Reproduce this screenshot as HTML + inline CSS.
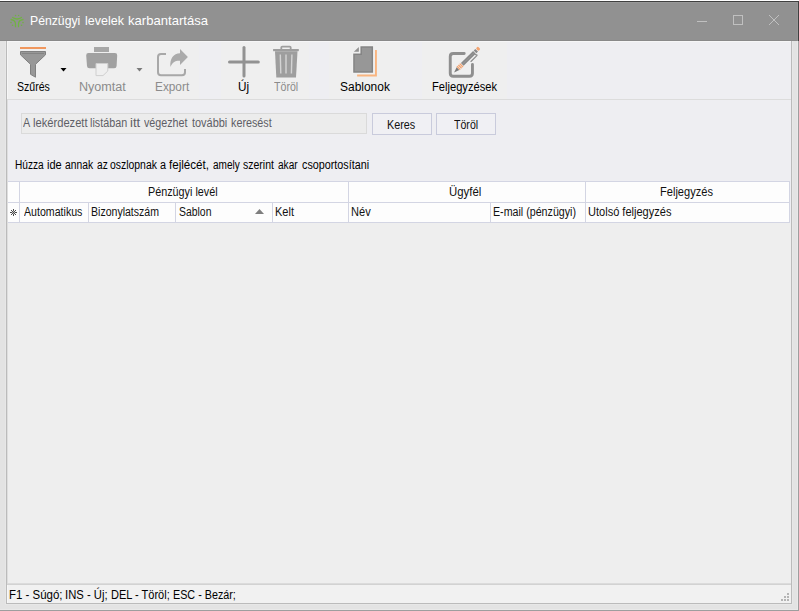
<!DOCTYPE html>
<html lang="hu">
<head>
<meta charset="utf-8">
<title>Pénzügyi levelek karbantartása</title>
<style>
html,body{margin:0;padding:0;}
body{width:799px;height:611px;overflow:hidden;background:#e5e5e5;font-family:"Liberation Sans",sans-serif;font-size:12px;color:#000;position:relative;}
.r{position:absolute;}
.tx{position:absolute;white-space:nowrap;line-height:1;transform-origin:0 0;}
svg{position:absolute;left:0;top:0;}
</style>
</head>
<body>
<!-- window frame -->
<div class="r" style="left:0;top:0;width:799px;height:611px;background:#e3e3e3"></div>
<div class="r" style="left:797px;top:41px;width:1px;height:569px;background:#e9e9e9"></div>
<div class="r" style="left:0;top:609px;width:798px;height:1px;background:#e9e9e9"></div>
<div class="r" style="left:5px;top:41px;width:788px;height:564px;background:#e7e7e7"></div>
<div class="r" style="left:6px;top:41px;width:786px;height:563px;background:#bbbbbb"></div>
<div class="r" style="left:7px;top:41px;width:784px;height:562px;background:#eeeef2"></div>
<div class="r" style="left:798px;top:0;width:1px;height:611px;background:#9e9e9e"></div>
<div class="r" style="left:0;top:610px;width:799px;height:1px;background:#9e9e9e"></div>
<!-- title bar -->
<div class="r" style="left:0;top:0;width:799px;height:41px;background:#919191"></div>
<div class="r" style="left:0;top:40px;width:798px;height:1px;background:#898989"></div>
<div class="r" style="left:0;top:2px;width:798px;height:1px;background:#999999"></div>
<div class="r" style="left:797px;top:2px;width:1px;height:39px;background:#979797"></div>
<div class="r" style="left:0;top:1px;width:799px;height:1px;background:#404040"></div>
<div class="r" style="left:798px;top:1px;width:1px;height:40px;background:#404040"></div>
<div class="r" style="left:0;top:0;width:799px;height:1px;background:#ffffff"></div>
<!-- toolbar -->
<div class="r" style="left:7px;top:41px;width:784px;height:58px;background:#eeeef2"></div>
<div class="r" style="left:7px;top:41px;width:192px;height:58px;background:#efefef"></div>
<div class="r" style="left:221px;top:41px;width:88px;height:58px;background:#efefef"></div>
<div class="r" style="left:329px;top:41px;width:71px;height:58px;background:#efefef"></div>
<div class="r" style="left:422px;top:41px;width:85px;height:58px;background:#efefef"></div>
<div class="r" style="left:7px;top:99px;width:784px;height:1px;background:#dcdcdc"></div>
<div class="r" style="left:7px;top:41px;width:784px;height:1px;background:#f6f6f7"></div>
<div class="r" style="left:7px;top:41px;width:1px;height:58px;background:#f6f6f6"></div>
<!-- search row -->
<div class="r" style="left:21px;top:113px;width:346px;height:21px;background:#dadada"></div>
<div class="r" style="left:22px;top:114px;width:344px;height:19px;background:#ececec"></div>
<div class="r" style="left:372px;top:113px;width:60px;height:22px;background:#c9cbdc"></div>
<div class="r" style="left:373px;top:114px;width:58px;height:20px;background:#f0f0f4"></div>
<div class="r" style="left:436px;top:113px;width:60px;height:22px;background:#c9cbdc"></div>
<div class="r" style="left:437px;top:114px;width:58px;height:20px;background:#f0f0f4"></div>
<!-- grid -->
<div class="r" style="left:8px;top:181px;width:782px;height:42px;background:#d3d5e3"></div>
<div class="r" style="left:8px;top:182px;width:11px;height:20px;background:#fdfdfd"></div>
<div class="r" style="left:8px;top:203px;width:11px;height:19px;background:#fdfdfd"></div>
<div class="r" style="left:20px;top:182px;width:328px;height:20px;background:#fdfdfd"></div>
<div class="r" style="left:349px;top:182px;width:236px;height:20px;background:#fdfdfd"></div>
<div class="r" style="left:586px;top:182px;width:203px;height:20px;background:#fdfdfd"></div>
<div class="r" style="left:20px;top:203px;width:68px;height:19px;background:#fdfdfd"></div>
<div class="r" style="left:89px;top:203px;width:86px;height:19px;background:#fdfdfd"></div>
<div class="r" style="left:176px;top:203px;width:96px;height:19px;background:#fdfdfd"></div>
<div class="r" style="left:273px;top:203px;width:75px;height:19px;background:#fdfdfd"></div>
<div class="r" style="left:349px;top:203px;width:141px;height:19px;background:#fdfdfd"></div>
<div class="r" style="left:491px;top:203px;width:94px;height:19px;background:#fdfdfd"></div>
<div class="r" style="left:586px;top:203px;width:203px;height:19px;background:#fdfdfd"></div>
<div class="r" style="left:8px;top:223px;width:783px;height:360px;background:#eeeeee"></div>
<div class="r" style="left:7px;top:100px;width:1px;height:483px;background:#dedede"></div>
<!-- status bar -->
<div class="r" style="left:7px;top:583px;width:784px;height:1px;background:#dbdbdb"></div>
<div class="r" style="left:7px;top:584px;width:784px;height:1px;background:#d2d2d2"></div>
<div class="r" style="left:7px;top:585px;width:784px;height:18px;background:#f1f1f1"></div>
<div class="r" style="left:7px;top:585px;width:1px;height:18px;background:#f7f7f7"></div>

<svg width="799" height="611" viewBox="0 0 799 611">
<!-- app icon -->
<g fill="none" stroke="#71b244" stroke-width="1.300" stroke-linecap="round">
<path d="M12.700 17.400Q17.050 20.600 21.400 17.400"/>
<path d="M11.100 19.500Q15.500 20.200 15.500 24.200V26.700"/>
<path d="M23 19.500Q18.500 20.200 18.500 24.200V26.700"/>
</g>
<g fill="#71b244">
<circle cx="15.550" cy="15.500" r=".8"/><circle cx="18.600" cy="15.500" r=".8"/>
<circle cx="11" cy="22.600" r=".8"/><circle cx="12.550" cy="25.300" r=".8"/>
<circle cx="23" cy="22.600" r=".8"/><circle cx="21.500" cy="25.300" r=".8"/>
</g>
<!-- window controls -->
<g stroke="#c0c0c0" stroke-width="1" fill="none">
<path d="M697 21.5H707"/>
<rect x="733.5" y="15.500" width="9" height="9"/>
<path d="M769 15L779 25M779 15L769 25"/>
</g>
<!-- funnel -->
<rect x="20" y="47" width="26" height="2" fill="#f0975e"/>
<path d="M20.5 51.500H45.500V54.800L35.500 64.300V77.200L30.500 74.300V64.300L20.500 54.800Z" fill="#989898" stroke="#808080" stroke-width="1" stroke-linejoin="round"/>
<path d="M22 53.500H44" stroke="#848484" stroke-width="1" fill="none"/>
<path d="M60.500 68H66.500L63.500 71.500Z" fill="#000"/>
<!-- printer -->
<rect x="94" y="47" width="15" height="5" fill="#a7a7a7"/>
<path d="M88.500 53H114.900Q117.300 53 117.200 55.400L116.600 65.900Q116.500 68.300 114.100 68.300H89.500Q87.100 68.300 87 65.900L86.200 55.400Q86.100 53 88.500 53Z" fill="#a1a1a1"/>
<path d="M96 63.500H107.800V71L103 75.600H96Z" fill="#efefef" stroke="#cfcfcf" stroke-width="1"/>
<path d="M136.500 68H142.500L139.500 71.500Z" fill="#7a7a7a"/>
<!-- export -->
<path d="M166 54.100H161Q158 54.100 158 57.100V72.200Q158 75.200 161 75.200H182Q185 75.200 185 72.200V69" fill="none" stroke="#a8a8a8" stroke-width="2"/>
<path d="M180 49.100L187.900 57L180 64.900V60.800C175 60.600 172.500 62.500 170.400 66.900C169.600 58.500 173.500 53.500 180 53.300Z" fill="#ababab"/>
<!-- plus -->
<rect x="242.500" y="46" width="3" height="31.600" rx="1.500" fill="#929292"/>
<rect x="228" y="60.500" width="31.800" height="3" rx="1.500" fill="#929292"/>
<!-- trash -->
<path d="M281.300 49.500V47.600Q281.300 46.700 282.300 46.700H289.700Q290.700 46.700 290.700 47.600V49.500" fill="none" stroke="#9e9e9e" stroke-width="1.800"/>
<rect x="273.100" y="49" width="25.700" height="2.200" fill="#9e9e9e"/>
<path d="M275 51.200H297.500L296 77.600H276.300Z" fill="#9e9e9e"/>
<g stroke="#d4d4d4" stroke-width="1.400"><path d="M280.300 54.500L280.800 73.500"/><path d="M286 54.500V73.500"/><path d="M291.900 54.500L291.400 73.500"/></g>
<!-- sablonok -->
<path d="M375 49.900H376.900V76.400H357.100V74.400H375Z" fill="#f9b580"/>
<path d="M352.700 53H359.900V45.800H373.700V73.300H352.700Z" fill="#f7f7f7"/>
<path d="M360.400 46.300H373.100V72.800H353.200V53.500H360.400Z" fill="#848484"/>
<path d="M361.900 47.800H371.600V71.300H354.700V55H361.900Z" fill="#979797"/>
<path d="M353.800 51.700H358.900V46.900Z" fill="#929292"/>
<!-- feljegyzesek -->
<path d="M464.200 53.550H453.250Q450.250 53.550 450.250 56.550V73.250Q450.250 76.250 453.250 76.250H469.450Q472.450 76.250 472.450 73.250V64.400" fill="none" stroke="#8f8f8f" stroke-width="2.900" stroke-linecap="round"/>
<g transform="translate(454.100 72.400) rotate(-44.500) scale(.97 1)">
<path d="M0 0L5.600 -1.900V1.900Z" fill="#7a7a7a"/>
<rect x="5.800" y="-2.300" width="1.400" height="4.600" fill="#f3a370"/>
<rect x="7.800" y="-2.300" width="1.400" height="4.600" fill="#f3a370"/>
<rect x="9.800" y="-2.300" width="1.400" height="4.600" fill="#f3a370"/>
<rect x="11.800" y="-1.900" width="17.600" height="3.800" fill="#898989"/>
<path d="M12 0H29.200" stroke="#9c9c9c" stroke-width=".7" fill="none"/>
<rect x="30.300" y="-1.900" width="2.300" height="3.800" fill="#898989"/>
<rect x="33.200" y="-1.900" width="3" height="3.800" rx="1.200" fill="#f3a370"/>
<path d="M28.500 2.200Q30.600 4 28.500 4H20.300" stroke="#8c8c8c" stroke-width="1.200" fill="none" stroke-linecap="round"/>
</g>
<!-- sort arrow -->
<path d="M255 214H264L259.500 209Z" fill="#7e7e7e"/>
<!-- row indicator -->
<g fill="#4c4c4c"><rect x="13" y="209" width="1" height="7"/><rect x="10" y="212" width="7" height="1"/><rect x="11" y="210" width="1" height="1"/><rect x="12" y="211" width="1" height="1"/><rect x="14" y="213" width="1" height="1"/><rect x="15" y="214" width="1" height="1"/><rect x="15" y="210" width="1" height="1"/><rect x="14" y="211" width="1" height="1"/><rect x="12" y="213" width="1" height="1"/><rect x="11" y="214" width="1" height="1"/></g>
<g fill="#bdbdbd"><rect x="13" y="211" width="1" height="1"/><rect x="13" y="213" width="1" height="1"/><rect x="12" y="212" width="1" height="1"/><rect x="14" y="212" width="1" height="1"/></g>
<!-- size grip -->
<g fill="#b4b4b4"><rect x="787" y="593" width="2" height="2"/><rect x="784" y="596" width="2" height="2"/><rect x="787" y="596" width="2" height="2"/><rect x="781" y="599" width="2" height="2"/><rect x="784" y="599" width="2" height="2"/><rect x="787" y="599" width="2" height="2"/></g>

</svg>

<div class="tx" id="t_title1" style="left:30.00px;top:14.00px;font-size:13px;color:#ffffff;transform:scaleX(0.9397)">Pénzügyi</div>
<div class="tx" id="t_title2" style="left:85.00px;top:14.00px;font-size:13px;color:#ffffff;transform:scaleX(0.9613)">levelek</div>
<div class="tx" id="t_title3" style="left:128.00px;top:14.00px;font-size:13px;color:#ffffff;transform:scaleX(1.0063)">karbantartása</div>
<div class="tx" id="t_szures" style="left:17.00px;top:81.00px;font-size:12px;color:#000;transform:scaleX(0.8803)">Szűrés</div>
<div class="tx" id="t_nyomtat" style="left:79.00px;top:81.00px;font-size:12px;color:#8b8b8b;transform:scaleX(1.0478)">Nyomtat</div>
<div class="tx" id="t_export" style="left:155.00px;top:81.00px;font-size:12px;color:#8b8b8b;transform:scaleX(0.9851)">Export</div>
<div class="tx" id="t_uj" style="left:238.00px;top:81.00px;font-size:12px;color:#000;transform:scaleX(0.9800)">Új</div>
<div class="tx" id="t_torol" style="left:274.00px;top:81.00px;font-size:12px;color:#8b8b8b;transform:scaleX(0.8843)">Töröl</div>
<div class="tx" id="t_sablonok" style="left:340.00px;top:81.00px;font-size:12px;color:#000;transform:scaleX(0.9969)">Sablonok</div>
<div class="tx" id="t_felj" style="left:432.00px;top:81.00px;font-size:12px;color:#000;transform:scaleX(0.9290)">Feljegyzések</div>
<div class="tx" id="t_s1" style="left:23.00px;top:117.00px;font-size:12px;color:#5e5e66;transform:scaleX(0.9000)">A</div>
<div class="tx" id="t_s2" style="left:33.00px;top:117.00px;font-size:12px;color:#5e5e66;transform:scaleX(0.9297)">lekérdezett</div>
<div class="tx" id="t_s3" style="left:90.00px;top:117.00px;font-size:12px;color:#5e5e66;transform:scaleX(0.8975)">listában</div>
<div class="tx" id="t_s4" style="left:130.00px;top:117.00px;font-size:12px;color:#5e5e66;transform:scaleX(1.0900)">itt</div>
<div class="tx" id="t_s5" style="left:144.00px;top:117.00px;font-size:12px;color:#5e5e66;transform:scaleX(0.8932)">végezhet</div>
<div class="tx" id="t_s6" style="left:192.00px;top:117.00px;font-size:12px;color:#5e5e66;transform:scaleX(0.9107)">további</div>
<div class="tx" id="t_s7" style="left:231.00px;top:117.00px;font-size:12px;color:#5e5e66;transform:scaleX(0.8986)">keresést</div>
<div class="tx" id="t_keres" style="left:387.00px;top:119.00px;font-size:12px;color:#111;transform:scaleX(0.9017)">Keres</div>
<div class="tx" id="t_torol2" style="left:454.00px;top:119.00px;font-size:12px;color:#111;transform:scaleX(0.8820)">Töröl</div>
<div class="tx" id="t_g1" style="left:15.00px;top:159.00px;font-size:12px;color:#000;transform:scaleX(0.8441)">Húzza</div>
<div class="tx" id="t_g2" style="left:47.00px;top:159.00px;font-size:12px;color:#000;transform:scaleX(0.9172)">ide</div>
<div class="tx" id="t_g3" style="left:65.00px;top:159.00px;font-size:12px;color:#000;transform:scaleX(0.8580)">annak</div>
<div class="tx" id="t_g4" style="left:97.00px;top:159.00px;font-size:12px;color:#000;transform:scaleX(0.8438)">az</div>
<div class="tx" id="t_g5" style="left:110.00px;top:159.00px;font-size:12px;color:#000;transform:scaleX(0.8683)">oszlopnak</div>
<div class="tx" id="t_g6" style="left:160.00px;top:159.00px;font-size:12px;color:#000;transform:scaleX(0.9000)">a</div>
<div class="tx" id="t_g7" style="left:169.00px;top:159.00px;font-size:12px;color:#000;transform:scaleX(0.9679)">fejlécét,</div>
<div class="tx" id="t_g8" style="left:213.00px;top:159.00px;font-size:12px;color:#000;transform:scaleX(0.8367)">amely</div>
<div class="tx" id="t_g9" style="left:243.00px;top:159.00px;font-size:12px;color:#000;transform:scaleX(0.8753)">szerint</div>
<div class="tx" id="t_g10" style="left:278.00px;top:159.00px;font-size:12px;color:#000;transform:scaleX(0.8400)">akar</div>
<div class="tx" id="t_g11" style="left:302.00px;top:159.00px;font-size:12px;color:#000;transform:scaleX(0.8977)">csoportosítani</div>
<div class="tx" id="t_b1" style="left:148.00px;top:186.00px;font-size:12px;color:#111;transform:scaleX(0.8990)">Pénzügyi levél</div>
<div class="tx" id="t_b2" style="left:449.00px;top:186.00px;font-size:12px;color:#111;transform:scaleX(0.9484)">Ügyfél</div>
<div class="tx" id="t_b3" style="left:660.00px;top:186.00px;font-size:12px;color:#111;transform:scaleX(0.9226)">Feljegyzés</div>
<div class="tx" id="t_c1" style="left:24.00px;top:206.00px;font-size:12px;color:#111;transform:scaleX(0.8847)">Automatikus</div>
<div class="tx" id="t_c2" style="left:91.00px;top:206.00px;font-size:12px;color:#111;transform:scaleX(0.8788)">Bizonylatszám</div>
<div class="tx" id="t_c3" style="left:179.00px;top:206.00px;font-size:12px;color:#111;transform:scaleX(0.8684)">Sablon</div>
<div class="tx" id="t_c4" style="left:275.00px;top:206.00px;font-size:12px;color:#111;transform:scaleX(0.9193)">Kelt</div>
<div class="tx" id="t_c5" style="left:351.00px;top:206.00px;font-size:12px;color:#111;transform:scaleX(0.9221)">Név</div>
<div class="tx" id="t_c6" style="left:493.00px;top:206.00px;font-size:12px;color:#111;transform:scaleX(0.8892)">E-mail (pénzügyi)</div>
<div class="tx" id="t_c7" style="left:588.00px;top:206.00px;font-size:12px;color:#111;transform:scaleX(0.9197)">Utolsó feljegyzés</div>
<div class="tx" id="t_st1" style="left:9.00px;top:589.00px;font-size:12px;color:#000;transform:scaleX(0.9547)">F1 - Súgó;</div>
<div class="tx" id="t_st2" style="left:65.00px;top:589.00px;font-size:12px;color:#000;transform:scaleX(0.9382)">INS - Új;</div>
<div class="tx" id="t_st3" style="left:111.00px;top:589.00px;font-size:12px;color:#000;transform:scaleX(0.9170)">DEL - Töröl;</div>
<div class="tx" id="t_st4" style="left:173.00px;top:589.00px;font-size:12px;color:#000;transform:scaleX(0.8976)">ESC - Bezár;</div>
</body>
</html>
